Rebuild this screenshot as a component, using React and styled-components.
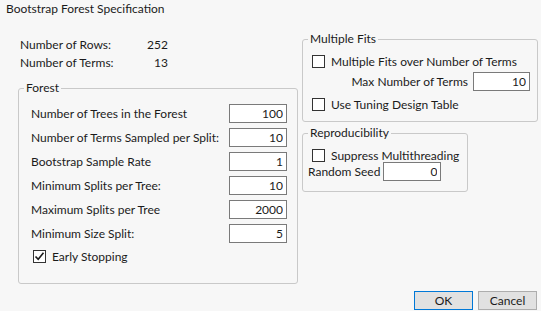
import styled, { createGlobalStyle } from "styled-components";

const GlobalStyle = createGlobalStyle`
  html, body {
    margin: 0;
    padding: 0;
    background: #f7f7f7;
  }
  body {
    font-family: Lato, "Noto Sans", sans-serif;
    font-size: 12px;
    color: #1b1b1b;
    white-space: nowrap;
  }
`;

const Dialog = styled.div`
  width: 541px;
  height: 311px;
  box-sizing: border-box;
  background: #f7f7f7;
  display: flex;
  flex-direction: column;
`;

const Title = styled.div`
  height: 18px;
  line-height: 18px;
  padding-left: 6px;
`;

const Main = styled.div`
  display: flex;
  align-items: flex-start;
  padding: 13px 0 0 18px;
  gap: 4px;
`;

const LeftCol = styled.div`
  width: 280px;
  display: flex;
  flex-direction: column;
`;

const RightCol = styled.div`
  display: flex;
  flex-direction: column;
  gap: 3px;
`;

const Stats = styled.div`
  display: grid;
  grid-template-columns: 127px 21px;
  grid-auto-rows: 18px;
  align-items: center;
  padding: 4px 0 0 2px;
  margin-bottom: 9px;
`;

const StatValue = styled.span`
  text-align: right;
`;

const Group = styled.fieldset`
  margin: 0;
  width: ${(p) => p.$width}px;
  box-sizing: border-box;
  border: 1px solid #c9c9c9;
  border-radius: 3px;
  padding: 0;
  min-width: 0;
`;

const Legend = styled.legend`
  padding: 0 2px;
  margin-left: 5px;
  line-height: 16px;
`;

const GroupBody = styled.div`
  padding: ${(p) => p.$pad};
  display: flex;
  flex-direction: column;
`;

const FieldList = styled.div`
  display: flex;
  flex-direction: column;
  gap: 5px;
`;

const FieldRow = styled.div`
  display: flex;
  align-items: center;
  justify-content: space-between;
  height: 19px;
`;

const NumBox = styled.input`
  width: ${(p) => p.$w || 58}px;
  height: 19px;
  box-sizing: border-box;
  border: 1px solid #7a7a7a;
  background: #fff;
  font: inherit;
  color: #1b1b1b;
  text-align: right;
  padding: 0 3px 0 0;
  margin: 0;
  outline: none;
`;

const CheckRow = styled.label`
  display: flex;
  align-items: center;
  gap: 6px;
  height: ${(p) => p.$h || 19}px;
  margin: ${(p) => p.$m || "0"};
`;

const Box = styled.span`
  width: 13px;
  height: 13px;
  box-sizing: border-box;
  border: 1px solid #333;
  background: #fff;
  display: flex;
  align-items: center;
  justify-content: center;
`;

const InlineRow = styled.div`
  display: flex;
  align-items: center;
  justify-content: ${(p) => p.$justify || "flex-start"};
  gap: ${(p) => p.$gap}px;
  margin: ${(p) => p.$m || "0"};
  height: 19px;
`;

const Footer = styled.div`
  display: flex;
  justify-content: flex-end;
  gap: 5px;
  padding: 7px 4px 0 0;
`;

const Button = styled.button`
  width: 59px;
  height: 19px;
  box-sizing: border-box;
  background: #e1e1e1;
  border: 1px solid ${(p) => (p.$primary ? "#0078d7" : "#adadad")};
  font: inherit;
  color: #1b1b1b;
  padding: 0;
  line-height: 17px;
`;

const Check = ({ checked }) => (
  <Box>
    {checked && (
      <svg width="11" height="11" viewBox="0 0 11 11">
        <path d="M1.5 5.5 L4.2 8.3 L9.5 1.8" fill="none" stroke="#1b1b1b" strokeWidth="1.6" />
      </svg>
    )}
  </Box>
);

const forestFields = [
  ["Number of Trees in the Forest", "100"],
  ["Number of Terms Sampled per Split:", "10"],
  ["Bootstrap Sample Rate", "1"],
  ["Minimum Splits per Tree:", "10"],
  ["Maximum Splits per Tree", "2000"],
  ["Minimum Size Split:", "5"],
];

export default function App() {
  return (
    <Dialog>
      <GlobalStyle />
      <Title>Bootstrap Forest Specification</Title>
      <Main>
        <LeftCol>
          <Stats>
            <span>Number of Rows:</span>
            <StatValue>252</StatValue>
            <span>Number of Terms:</span>
            <StatValue>13</StatValue>
          </Stats>
          <Group $width={280}>
            <Legend>Forest</Legend>
            <GroupBody $pad="8px 10px 17px 12px">
              <FieldList>
                {forestFields.map(([label, value]) => (
                  <FieldRow key={label}>
                    <span>{label}</span>
                    <NumBox defaultValue={value} />
                  </FieldRow>
                ))}
              </FieldList>
              <CheckRow $m="4px 0 0 2px">
                <Check checked />
                Early Stopping
              </CheckRow>
            </GroupBody>
          </Group>
        </LeftCol>
        <RightCol>
          <Group $width={236}>
            <Legend>Multiple Fits</Legend>
            <GroupBody $pad="5px 7px 7px 9px">
              <CheckRow>
                <Check />
                Multiple Fits over Number of Terms
              </CheckRow>
              <InlineRow $gap={5} $justify="flex-end" $m="1px 0 0 0">
                <span>Max Number of Terms</span>
                <NumBox $w={57} defaultValue="10" />
              </InlineRow>
              <CheckRow $m="4px 0 0 0">
                <Check />
                Use Tuning Design Table
              </CheckRow>
            </GroupBody>
          </Group>
          <Group $width={166}>
            <Legend>Reproducibility</Legend>
            <GroupBody $pad="7px 6px 10px 5px">
              <CheckRow $h={14} $m="0 0 0 4px">
                <Check />
                Suppress Multithreading
              </CheckRow>
              <InlineRow $gap={3}>
                <span>Random Seed</span>
                <NumBox defaultValue="0" />
              </InlineRow>
            </GroupBody>
          </Group>
        </RightCol>
      </Main>
      <Footer>
        <Button $primary>OK</Button>
        <Button>Cancel</Button>
      </Footer>
    </Dialog>
  );
}
